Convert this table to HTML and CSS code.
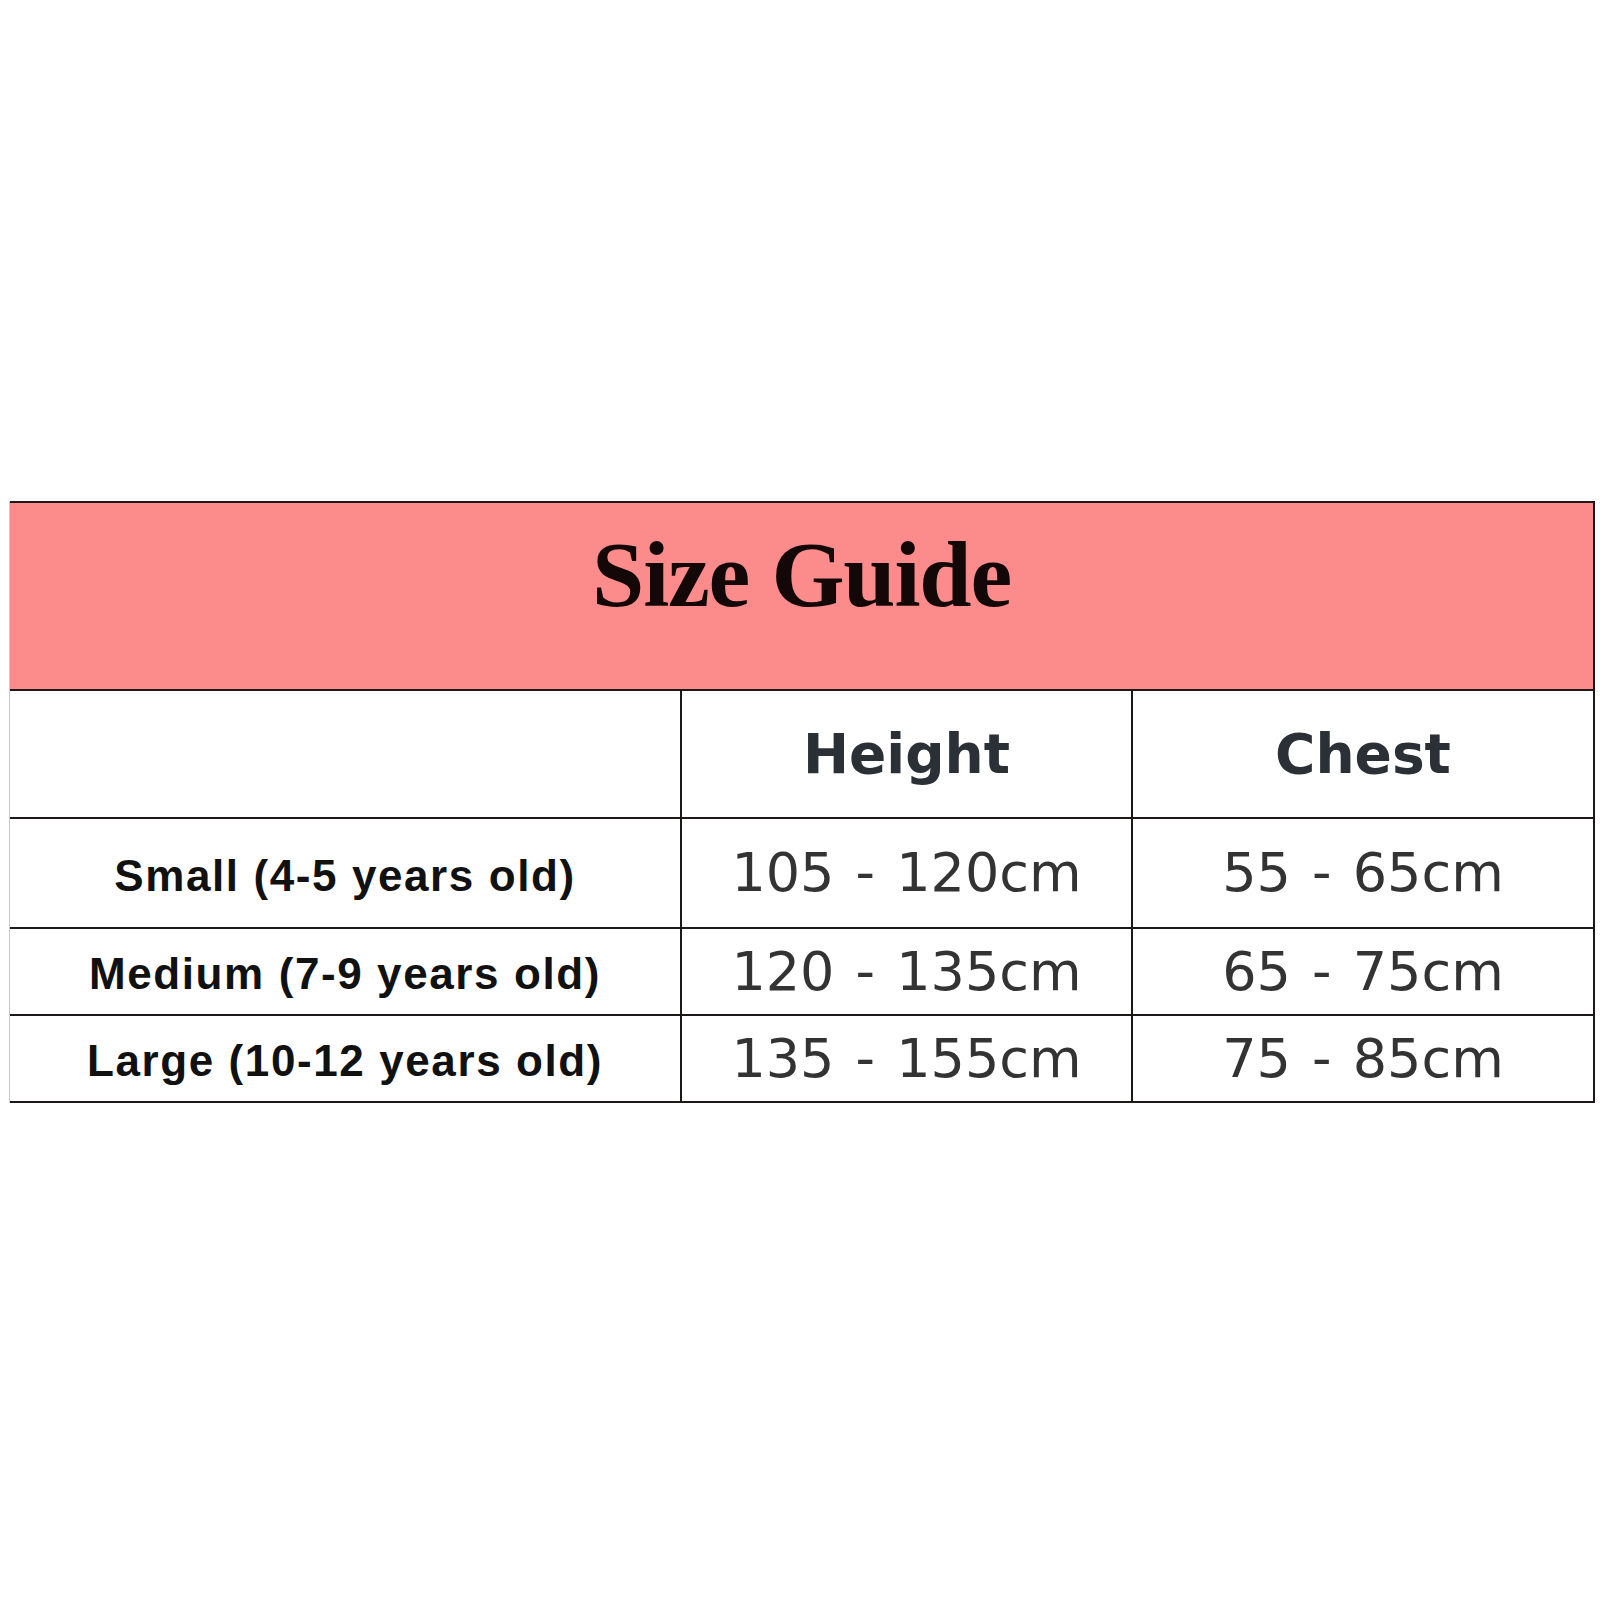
FILE: index.html
```html
<!DOCTYPE html>
<html>
<head>
<meta charset="utf-8">
<link rel="stylesheet" href="styles.css">
<title>Size Guide</title>
</head>
<body>
<div class="page">
  <div class="guide">
    <div class="title">Size Guide</div>
    <div class="cell"></div>
    <div class="cell head">Height</div>
    <div class="cell head">Chest</div>
    <div class="cell label row1">Small (4-5 years old)</div>
    <div class="cell num row1">105 - 120cm</div>
    <div class="cell num row1">55 - 65cm</div>
    <div class="cell label">Medium (7-9 years old)</div>
    <div class="cell num">120 - 135cm</div>
    <div class="cell num">65 - 75cm</div>
    <div class="cell label">Large (10-12 years old)</div>
    <div class="cell num">135 - 155cm</div>
    <div class="cell num">75 - 85cm</div>
  </div>
</div>
</body>
</html>
```
FILE: styles.css
```css
html, body {
  margin: 0;
  padding: 0;
  background: #ffffff;
}
.page {
  width: 1600px;
  height: 1600px;
  padding-top: 501px;
  padding-left: 9px;
  box-sizing: border-box;
}
.guide {
  display: grid;
  grid-template-columns: 670px 449px 460px;
  grid-template-rows: 186px 126px 108px 85px 85px;
  gap: 2px;
  padding: 2px 2px 2px 0;
  border-left: 1px solid #c9c9c9;
  background: #1c1818;
  width: max-content;
}
.title {
  grid-column: 1 / 4;
  background: #fc8b8b;
  display: flex;
  align-items: center;
  justify-content: center;
  font-family: "Liberation Serif", serif;
  font-weight: bold;
  font-size: 94px;
  line-height: 1;
  letter-spacing: -1.2px;
  color: #140707;
  padding-bottom: 44px;
  box-sizing: border-box;
}
.cell {
  background: #ffffff;
  display: flex;
  align-items: center;
  justify-content: center;
  line-height: 1;
  white-space: nowrap;
}
.head {
  font-family: "DejaVu Sans", sans-serif;
  font-weight: bold;
  font-size: 55px;
  color: #2a3035;
}
.label {
  font-family: "Liberation Sans", Arial, sans-serif;
  font-weight: bold;
  font-size: 44px;
  letter-spacing: 1.6px;
  color: #111111;
  padding-top: 5px;
  box-sizing: border-box;
}
.num {
  font-family: "DejaVu Sans", sans-serif;
  font-size: 54px;
  letter-spacing: 0;
  word-spacing: 4px;
  color: #333333;
}
```
